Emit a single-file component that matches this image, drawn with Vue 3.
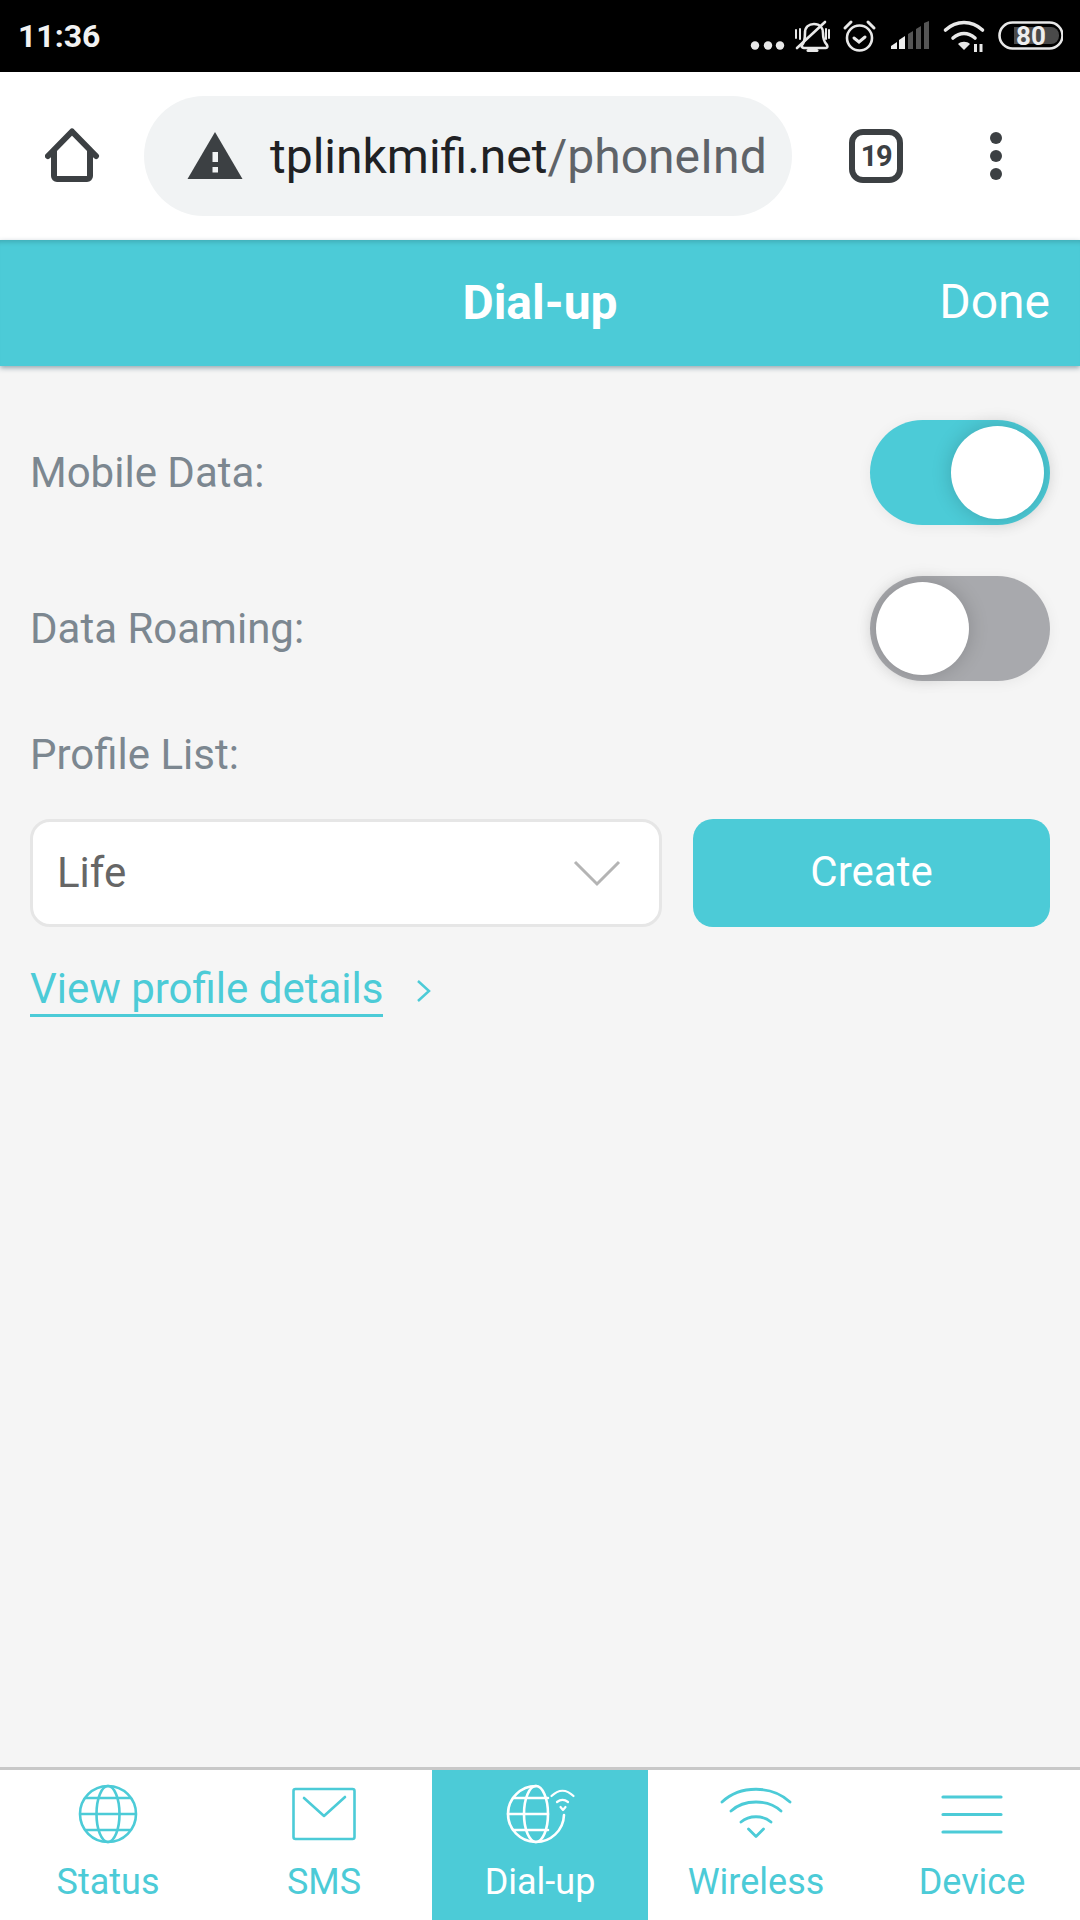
<script setup>
const tabs = ['Status', 'SMS', 'Dial-up', 'Wireless', 'Device']
</script>

<template>
  <div class="page">
    <div class="statusbar">
      <span class="time">11:36</span>
      <svg class="sysicons" width="320" height="72" viewBox="0 0 320 72">
        <g transform="translate(-743 0)">
          <circle cx="755" cy="45.5" r="4.2" fill="#e8e8e8"/>
          <circle cx="768" cy="45.5" r="4.2" fill="#e8e8e8"/>
          <circle cx="780" cy="45.5" r="4.2" fill="#e8e8e8"/>
          <g fill="none" stroke="#e8e8e8" stroke-width="2.6" stroke-linecap="round">
            <path d="M802 45c3-3 3-8 3-12 0-6 4-9 9-9 6 0 9 4 9 9 0 5 1 9 4 12 1 2 0 3-1 3h-22c-1 0-3-1-2-3z"/>
            <path d="M796 30v8M800 29v10M826 29v10M829 30v8" stroke-width="2"/>
            <path d="M797 48l28-26"/>
            <path d="M808 50.5h9" stroke-width="3"/>
            <circle cx="859.5" cy="38" r="12.5"/>
            <path d="M854 38l5 4 6-5M845 28l6-6M874 28l-6-6" stroke-width="3"/>
            <path d="M945.500 30c11-10 26-10 37 0M953 38c7-6 15-6 22 0" stroke-width="3.600"/>
          </g>
          <path d="M958 44c3-3 9-3 12 0l-6 6z" fill="#e8e8e8"/>
          <path d="M974 44h3v8h-3zM979.500 44h3v8h-3z" fill="#e8e8e8"/>
          <path d="M891 49v-3l6-4v7zM899 49v-9l6-4v13z" fill="#eee"/>
          <path d="M908 49v-15l5-3v18zM916 49v-20l5-3v23zM924 49v-26l5-2v28z" fill="#555"/>
          <rect x="999.5" y="22.5" width="63" height="26" rx="13" fill="none" stroke="#e8e8e8" stroke-width="2.6"/>
          <path d="M1014 27h37a8 8 0 0 1 8 8v1a8 8 0 0 1-8 8h-37z" fill="#4a4a4a"/>
          <text x="1031" y="45" text-anchor="middle" class="batt">80</text>
        </g>
      </svg>
    </div>

    <div class="toolbar">
      <svg class="home" width="56" height="56" viewBox="0 0 56 56" fill="none" stroke="#3c4043" stroke-width="6" stroke-linecap="round" stroke-linejoin="round">
        <path d="M3 28L27 3.500 51 28M9 23v25a3 3 0 0 0 3 3h30a3 3 0 0 0 3-3V23"/>
      </svg>
      <div class="omnibox">
        <svg class="warn" width="56" height="48" viewBox="0 0 56 48">
          <path d="M28 0L55.500 47H.5z" fill="#3c4043"/>
          <path d="M25.500 20h5.500v10h-5.500zM25.500 35h5.500v5.500h-5.500z" fill="#f1f3f4"/>
        </svg>
        <span class="url"><span class="host">tplinkmifi.net</span>/phoneInd</span>
      </div>
      <div class="tabcount">19</div>
      <div class="dots"><i></i><i></i><i></i></div>
    </div>

    <header class="header">
      <span class="title">Dial-up</span>
      <span class="done">Done</span>
    </header>

    <main class="main">
      <div class="row first">
        <span class="label">Mobile Data:</span>
        <div class="toggle on"><i></i></div>
      </div>
      <div class="row second">
        <span class="label">Data Roaming:</span>
        <div class="toggle off"><i></i></div>
      </div>
      <div class="label profile">Profile List:</div>
      <div class="pick">
        <div class="select">
          <span class="value">Life</span>
          <svg width="48" height="28" viewBox="0 0 48 28" fill="none" stroke="#b4b4b4" stroke-width="3"><path d="M2 3l22 22L46 3"/></svg>
        </div>
        <button class="create">Create</button>
      </div>
      <div class="link">
        <span class="linktext">View profile details</span>
        <svg width="16" height="24" viewBox="0 0 16 24" fill="none" stroke="#4ccbd7" stroke-width="2.500"><path d="M2 2l11 10L2 22"/></svg>
      </div>
    </main>

    <nav class="tabbar">
      <div v-for="(t, i) in tabs" :key="t" class="tab" :class="{ active: i === 2 }">
        <svg v-if="i === 0" class="ico" width="64" height="64" viewBox="0 0 64 64" fill="none" stroke="#4ccbd7" stroke-width="2.600">
          <circle cx="32" cy="32" r="28"/><ellipse cx="32" cy="32" rx="11.500" ry="28"/>
          <path d="M9 16h46M4 32h56M9 48h46"/>
        </svg>
        <svg v-else-if="i === 1" class="ico" width="64" height="64" viewBox="0 0 64 64" fill="none" stroke="#4ccbd7" stroke-width="2.600" stroke-linecap="round" stroke-linejoin="round">
          <rect x="1.500" y="7" width="61" height="50" rx="2"/>
          <path d="M12 16l20 18 21-19"/>
        </svg>
        <svg v-else-if="i === 2" class="ico wide" width="80" height="64" viewBox="0 0 80 64" fill="none" stroke="#fff" stroke-width="2.600" stroke-linecap="round" stroke-linejoin="round">
          <path d="M68 33A28 28 0 1 1 40 4"/>
          <ellipse cx="40" cy="32" rx="12" ry="28"/>
          <path d="M17 16h35M12 32h40M17 48h35"/>
          <path d="M55.500 14c7-7 15-7 22 0M61 20c4-3 7-3 11 0M64.500 25l2.500 3 2.500-3" stroke-width="2.200"/>
        </svg>
        <svg v-else-if="i === 3" class="ico" width="72" height="64" viewBox="0 0 72 64" fill="none" stroke="#4ccbd7" stroke-width="2.800" stroke-linecap="round" stroke-linejoin="round">
          <path d="M2 20c18-17 50-17 68 0M11 29c13-12 37-12 50 0M21 40c8-7 22-7 30 0M28.500 47l7.500 7.500 7.500-7.500"/>
        </svg>
        <svg v-else class="ico" width="64" height="64" viewBox="0 0 64 64" fill="none" stroke="#4ccbd7" stroke-width="3.200" stroke-linecap="round">
          <path d="M3 15h58M3 32.500h58M3 50h58"/>
        </svg>
        <span class="tablabel">{{ t }}</span>
      </div>
    </nav>
  </div>
</template>

<style scoped>
.page {
  width: 1080px;
  height: 1920px;
  display: flex;
  flex-direction: column;
  background: #f5f5f5;
  font-family: Roboto, "Liberation Sans", sans-serif;
  overflow: hidden;
}
.statusbar {
  height: 72px;
  flex: none;
  background: #000;
  display: flex;
  align-items: center;
  justify-content: space-between;
  padding-left: 18px;
}
.time { color: #f2f2f2; font-size: 32px; font-weight: 700; }
.sysicons { display: block; margin-right: 17px; }
.batt { font: 700 26px Roboto, sans-serif; fill: #eee; }
.toolbar {
  height: 168px;
  flex: none;
  background: #fff;
  display: flex;
  align-items: center;
  padding-left: 45px;
}
.home { flex: none; }
.omnibox {
  width: 648px;
  height: 120px;
  margin-left: 43px;
  border-radius: 60px;
  background: #f1f3f4;
  display: flex;
  align-items: center;
  padding-left: 43px;
  box-sizing: border-box;
  overflow: hidden;
}
.warn { flex: none; }
.url {
  margin-left: 27px;
  font-size: 48px;
  color: #5f6368;
  white-space: nowrap;
}
.host { color: #202124; }
.tabcount {
  width: 54px;
  height: 54px;
  margin-left: 57px;
  box-sizing: border-box;
  border: 6px solid #3c4043;
  border-radius: 14px;
  display: flex;
  align-items: center;
  justify-content: center;
  color: #3c4043;
  font-size: 29px;
  font-weight: 700;
  letter-spacing: -1.500px;
}
.dots {
  margin-left: 87px;
  display: flex;
  flex-direction: column;
  gap: 6px;
}
.dots i { width: 12px; height: 12px; border-radius: 50%; background: #3c4043; }
.header {
  height: 126px;
  flex: none;
  position: relative;
  z-index: 1;
  background: #4ccbd7;
  box-shadow: inset 0 6px 5px -4px rgba(0, 0, 0, .16), 0 2px 5px rgba(30, 70, 90, .45);
  display: flex;
  align-items: center;
  justify-content: center;
  color: #fff;
  box-sizing: border-box;
  padding-bottom: 2px;
}
.title { font-size: 48px; font-weight: 700; }
.done { position: absolute; right: 30px; margin-bottom: 2px; font-size: 48px; }
.main {
  flex: 1;
  padding: 54px 30px 0;
  box-sizing: border-box;
}
.row {
  height: 105px;
  display: flex;
  align-items: center;
  justify-content: space-between;
}
.second { margin-top: 51px; }
.label { font-size: 42px; color: #7c8790; }
.profile { margin-top: 49px; line-height: 50px; }
.toggle {
  width: 180px;
  height: 105px;
  border-radius: 53px;
  display: flex;
  align-items: center;
  padding: 0 6px;
  box-sizing: border-box;
  box-shadow: 0 2px 14px rgba(0, 0, 0, .06);
}
.toggle i {
  width: 93px;
  height: 93px;
  border-radius: 50%;
  background: #fff;
  box-shadow: 0 0 20px rgba(0, 0, 0, .18);
}
.toggle.on { background: #4ccbd7; justify-content: flex-end; }
.toggle.off { background: #a8a9ad; justify-content: flex-start; }
.pick {
  margin-top: 39px;
  display: flex;
  gap: 31px;
  align-items: stretch;
}
.select {
  width: 632px;
  height: 108px;
  box-sizing: border-box;
  background: #fff;
  border: 3px solid #e6e6e6;
  border-radius: 20px;
  display: flex;
  align-items: center;
  justify-content: space-between;
  padding: 0 38px 0 24px;
  font-size: 42px;
  color: #666;
}
.value { margin-bottom: 2px; }
.create {
  flex: 1;
  border: 0;
  border-radius: 20px;
  background: #4ccbd7;
  color: #fff;
  font: 400 42px Roboto, sans-serif;
  padding: 0 0 3px;
}
.link {
  margin-top: 37px;
  display: flex;
  align-items: center;
  gap: 33px;
  color: #4ccbd7;
  font-size: 42px;
}
.linktext {
  border-bottom: 3px solid #4ccbd7;
  line-height: 50px;
}
.tabbar {
  height: 153px;
  flex: none;
  display: flex;
  background: #fff;
  border-top: 3px solid #c8c8c8;
  box-sizing: border-box;
}
.tab {
  width: 216px;
  display: flex;
  flex-direction: column;
  align-items: center;
  color: #4ccbd7;
  padding-top: 12px;
  box-sizing: border-box;
}
.tab.active { background: #4ccbd7; color: #fff; }
.ico { flex: none; display: block; }
.wide { margin-right: 8px; }
.tablabel { font-size: 36px; line-height: 42px; margin-top: 15px; }
</style>
